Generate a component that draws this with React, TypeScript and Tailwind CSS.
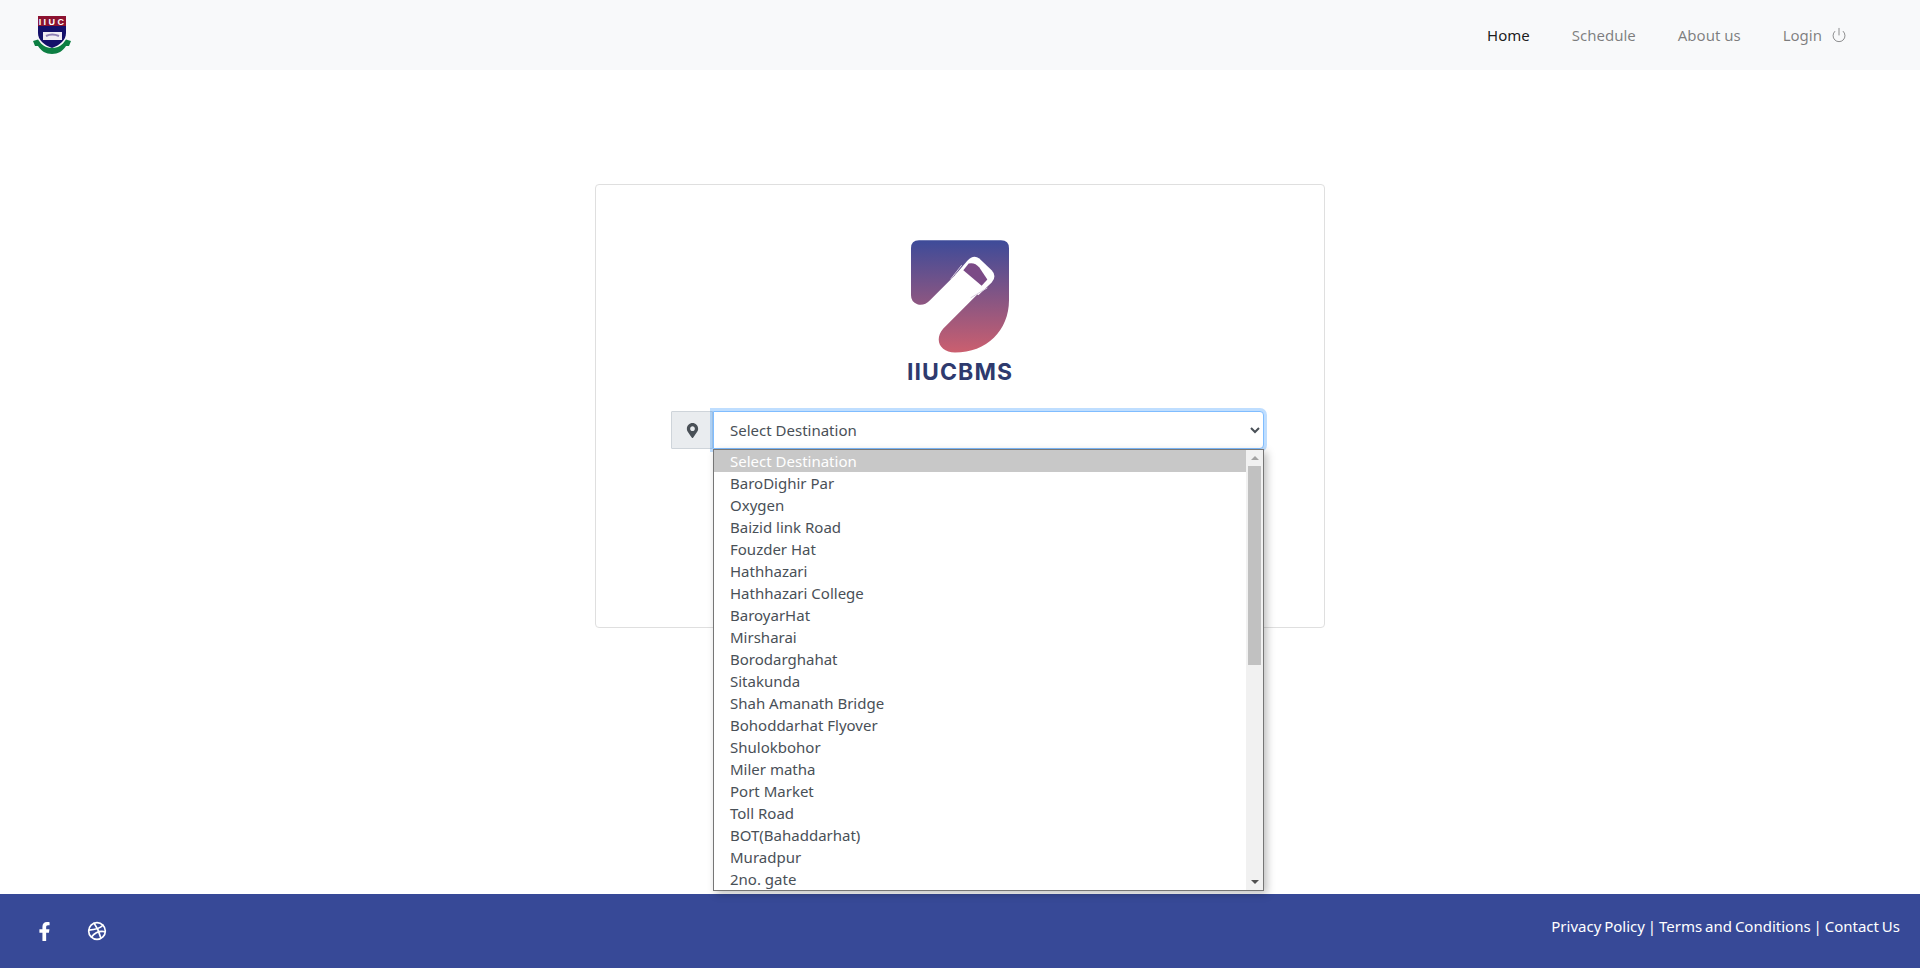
import { Power, Dribbble } from "lucide-react";
import { FaFacebookF, FaMapMarkerAlt } from "react-icons/fa";

const destinations = [
  "BaroDighir Par",
  "Oxygen",
  "Baizid link Road",
  "Fouzder Hat",
  "Hathhazari",
  "Hathhazari College",
  "BaroyarHat",
  "Mirsharai",
  "Borodarghahat",
  "Sitakunda",
  "Shah Amanath Bridge",
  "Bohoddarhat Flyover",
  "Shulokbohor",
  "Miler matha",
  "Port Market",
  "Toll Road",
  "BOT(Bahaddarhat)",
  "Muradpur",
  "2no. gate",
];

const Crest = () => (
  <svg width="38" height="41" viewBox="-1 0 38 41" className="block">
    <path d="M4 1h28v17c0 7-6 12-14 15C10 30 4 25 4 18z" fill="#14106a" />
    <rect x="4" y="1" width="28" height="10" fill="#8c1230" />
    <text x="18.5" y="9.5" textAnchor="middle" fontSize="9" fontWeight="700" fill="#fff" letterSpacing="2.4" fontFamily="Liberation Sans, sans-serif">IIUC</text>
    <rect x="9" y="17" width="19" height="8" fill="#f1ecf4" />
    <path d="M12 21q6-3 13 0" stroke="#8f7fb5" strokeWidth="2" fill="none" />
    <path d="M-1 26l5-1.500 3 4c3 3 7 4.500 11 4.500s8-1.500 11-4.500l3-4 5 1.500-2 5-3 0c-3 5-8 8-14 8s-11-3-14-8l-3 0z" fill="#0d7f43" />
  </svg>
);

const BusLogo = () => (
  <svg width="98" height="113" viewBox="93 60 294 338" className="block">
    <defs>
      <linearGradient id="logoFill" x1="0" y1="0" x2="0" y2="1">
        <stop offset="0" stopColor="#3d4b99" />
        <stop offset="1" stopColor="#cb5f6f" />
      </linearGradient>
    </defs>
    <path
      d="M117 60H363Q387 60 387 84V240C387 330 320 397 225 397C182 397 160 360 190 325L300 215L240 150L150 240Q132 258 112 252Q93 245 93 225V84Q93 60 117 60Z"
      fill="url(#logoFill)"
    />
    <path d="M225 165L262 122Q280 102 298 115L335 150Q352 168 335 187L295 225Z" fill="#fff" />
    <path d="M250 150L266 130Q285 126 298 142L322 178L305 197Z" fill="#7b4a86" />
    <path d="M212 177L245 135M272 233L322 203" stroke="#d9cfe0" strokeWidth="3" fill="none" />
  </svg>
);

const App = () => {
  return (
    <div className="flex min-h-[968px] flex-col bg-white font-['Noto_Sans',sans-serif] text-[15px] text-[#495057]">
      <header className="flex h-[70px] items-center justify-between bg-[#f8f9fa] pl-[33px] pr-[73px]">
        <Crest />
        <nav className="flex items-center gap-[42px] text-[#00000080]">
          <a className="text-[#000000e6]">Home</a>
          <a>Schedule</a>
          <a>About us</a>
          <a className="flex items-center gap-[9px]">
            Login <Power size={16} strokeWidth={1.3} />
          </a>
        </nav>
      </header>

      <main className="flex-1 pt-[114px]">
        <div className="mx-auto flex h-[444px] w-[730px] flex-col items-center rounded border border-[#dfdfdf] pt-[55px]">
          <div className="ml-[-1px]">
            <BusLogo />
          </div>
          <div className="mt-[4px] font-['Inter',sans-serif] text-[23px] leading-[30px] font-bold tracking-[1.1px] text-[#2e3a6e]">IIUCBMS</div>
          <div className="relative mt-[24px] ml-[75px] flex w-[593px] self-start">
            <div className="flex h-[38px] w-[42px] shrink-0 items-center justify-center rounded-l-[1px] border border-[#ced4da] bg-[#e9ecef] text-[#495057]">
              <FaMapMarkerAlt size={15} />
            </div>
            <select className="h-[38px] flex-1 rounded-r border border-[#80bdff] bg-white pl-[12px] pr-[4px] text-[15px] text-[#495057] shadow-[0_0_0_3px_rgba(0,123,255,0.25)] outline-none">
              <option>Select Destination</option>
            </select>

            <div className="absolute left-[42px] top-[38px] z-10 flex h-[442px] w-[551px] overflow-hidden border border-[#767676] bg-white leading-[22px] shadow-[3px_3px_8px_rgba(0,0,0,0.25)]">
              <ul className="flex-1 overflow-hidden">
                <li className="h-[22px] bg-[#c8c8c8] pl-4 text-white">Select Destination</li>
                {destinations.map((name) => (
                  <li key={name} className="h-[22px] pl-4">
                    {name}
                  </li>
                ))}
              </ul>
              <div className="flex w-[17px] shrink-0 flex-col items-center bg-[#f1f1f1]">
                <div className="mt-[6px] h-0 w-0 border-x-[4px] border-b-[4px] border-x-transparent border-b-[#a3a3a3]" />
                <div className="mt-[6px] h-[199px] w-[13px] bg-[#c1c1c1]" />
                <div className="mt-auto mb-[6px] h-0 w-0 border-x-[4px] border-t-[4px] border-x-transparent border-t-[#505050]" />
              </div>
            </div>
          </div>
        </div>
      </main>

      <footer className="flex h-[74px] items-center justify-between bg-[#374997] pl-[35px] pr-[20px] text-white">
        <div className="flex items-center gap-[33px]">
          <FaFacebookF size={19} />
          <Dribbble size={20} />
        </div>
        <div className="mb-[10px] [word-spacing:-1px]">Privacy Policy | Terms and Conditions | Contact Us</div>
      </footer>
    </div>
  );
};

export default App;
